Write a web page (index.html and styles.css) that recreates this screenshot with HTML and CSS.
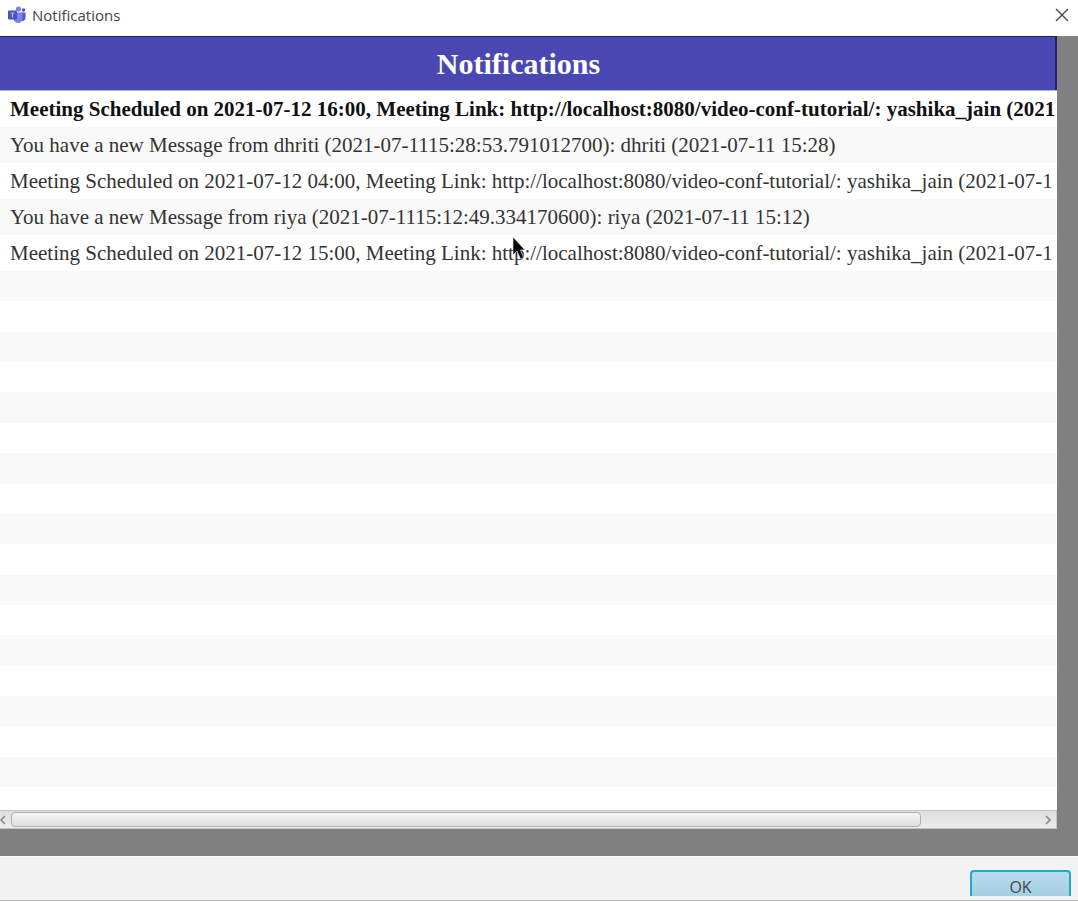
FILE: index.html
```html
<!DOCTYPE html>
<html lang="en">
<head>
<meta charset="utf-8">
<title>Notifications</title>
<link rel="stylesheet" href="styles.css">
</head>
<body>
<div class="dialog">
  <header class="titlebar">
    <svg class="app-icon" viewBox="0 0 18 18" aria-hidden="true">
      <circle cx="15.500" cy="4" r="1.700" fill="#4b53bc"/>
      <circle cx="10.500" cy="3" r="2.600" fill="#7b83eb"/>
      <path d="M12.500 6.500H17.500V11.500C17.500 14 16 15.300 13.500 15.300Z" fill="#5059c9"/>
      <path d="M5 6.500H14.500V12C14.500 15 12.500 17 10 17S5.500 15 5 12Z" fill="#7b83eb"/>
      <rect x="0" y="4.500" width="9" height="9" rx="1" fill="#4b53bc"/>
      <path d="M2.500 7H6.500M4.500 7V11.500" stroke="#b9bdf5" stroke-width="1.200" fill="none"/>
    </svg>
    <h1 class="window-title">Notifications</h1>
    <button class="close" type="button" aria-label="Close">
      <svg class="close-icon" viewBox="0 0 14 14" aria-hidden="true"><path d="M1 1L13 13M13 1L1 13" fill="none" stroke="#444" stroke-width="1.300"/></svg>
    </button>
  </header>
  <main class="stage">
    <section class="panel">
      <h2 class="banner">Notifications</h2>
      <ul class="list">
        <li class="row unread">Meeting Scheduled on 2021-07-12 16:00, Meeting Link: http://localhost:8080/video-conf-tutorial/: yashika_jain (2021</li>
        <li class="row">You have a new Message from dhriti (2021-07-1115:28:53.791012700): dhriti (2021-07-11 15:28)</li>
        <li class="row">Meeting Scheduled on 2021-07-12 04:00, Meeting Link: http://localhost:8080/video-conf-tutorial/: yashika_jain (2021-07-1</li>
        <li class="row">You have a new Message from riya (2021-07-1115:12:49.334170600): riya (2021-07-11 15:12)</li>
        <li class="row">Meeting Scheduled on 2021-07-12 15:00, Meeting Link: http://localhost:8080/video-conf-tutorial/: yashika_jain (2021-07-1</li>
        <li class="empty"></li><li class="empty"></li><li class="empty"></li>
        <li class="empty"></li><li class="empty"></li><li class="empty"></li>
        <li class="empty"></li><li class="empty"></li><li class="empty"></li>
        <li class="empty"></li><li class="empty"></li><li class="empty"></li>
        <li class="empty"></li><li class="empty"></li><li class="empty"></li>
        <li class="empty"></li><li class="empty"></li><li class="empty partial"></li>
      </ul>
      <div class="scrollbar">
        <button class="arrow" type="button" aria-label="Scroll left">
          <svg class="arrow-icon" viewBox="0 0 7 10" aria-hidden="true"><path d="M5 1L1 5L5 9" fill="none" stroke="#858585" stroke-width="1.500"/></svg>
        </button>
        <div class="track"><div class="thumb"></div></div>
        <button class="arrow" type="button" aria-label="Scroll right">
          <svg class="arrow-icon" viewBox="0 0 7 10" aria-hidden="true"><path d="M1 1L5 5L1 9" fill="none" stroke="#858585" stroke-width="1.500"/></svg>
        </button>
      </div>
    </section>
    <svg class="cursor" viewBox="0 0 16 26" aria-hidden="true"><path d="M1 1V19L5 15L8.500 23L11.500 21.500L8.500 14H13Z" fill="#080808" stroke="#eee" stroke-width="0.600"/></svg>
  </main>
  <footer class="actions">
    <button class="ok" type="button">OK</button>
  </footer>
</div>
</body>
</html>
```

FILE: styles.css
```css
* {
  box-sizing: border-box;
}

body {
  margin: 0;
  font-family: "Open Sans", "Noto Sans", sans-serif;
}

button {
  border: 0;
  padding: 0;
  background: none;
  font: inherit;
}

svg {
  display: block;
}

.dialog {
  display: flex;
  flex-direction: column;
  height: 100vh;
  background: #f2f2f2;
  border-bottom: 1px solid #b5b5b5;
}

.titlebar {
  display: flex;
  align-items: center;
  gap: 6px;
  padding: 0 9px 6px 8px;
  height: 36px;
  background: #fefefe;
}

.app-icon {
  width: 18px;
  height: 18px;
}

.window-title {
  flex: 1;
  margin: 0;
  font-size: 15px;
  font-weight: 400;
  line-height: 20px;
  color: #444;
}

.close-icon {
  width: 14px;
  height: 14px;
}

.stage {
  position: relative;
  flex: 1;
  min-height: 0;
  padding: 0 21px 27px 0;
  background: #808080;
}

.panel {
  display: flex;
  flex-direction: column;
  height: 100%;
  background: #fff;
}

.banner {
  margin: 0;
  padding-right: 20px;
  border-top: 1px solid #20206a;
  border-bottom: 1px solid #aeb0e8;
  background: #4a47b3;
  box-shadow: inset -2px 0 #20206a;
  color: #fff;
  font-family: "Liberation Serif", serif;
  font-size: 30px;
  line-height: 53px;
  text-align: center;
}

.list {
  display: flex;
  flex: 1;
  flex-direction: column;
  min-height: 0;
  margin: 0;
  padding: 0;
  overflow: hidden;
  list-style: none;
}

.row {
  flex: none;
  padding-left: 10px;
  font-family: "Liberation Serif", serif;
  font-size: 21px;
  line-height: 36px;
  color: #333;
  white-space: nowrap;
}

.unread {
  font-weight: 700;
  color: #111;
}

.empty {
  flex: 4;
}

.partial {
  flex: 3;
}

.list > :nth-child(even) {
  background: #f9f9f9;
}

.scrollbar {
  display: flex;
  align-items: center;
  height: 19px;
  border: 1px solid #c4c4c4;
  border-left: 0;
  background: linear-gradient(#dedede, #ebebeb);
}

.arrow {
  width: 11px;
}

.arrow-icon {
  width: 7px;
  height: 10px;
}

.track {
  flex: 1;
}

.thumb {
  width: 88%;
  height: 15px;
  border: 1px solid #b0b0b0;
  border-radius: 4px;
  background: linear-gradient(#f6f6f6, #dedede);
}

.cursor {
  position: absolute;
  left: 512px;
  top: 200px;
  width: 16px;
  height: 26px;
}

.actions {
  display: flex;
  justify-content: flex-end;
  height: 40px;
  margin-bottom: 4px;
  padding: 13px 7px 0 0;
  border-top: 1px solid #fafafa;
  overflow: hidden;
}

.ok {
  flex: none;
  width: 101px;
  height: 34px;
  border: 2px solid #22a9c9;
  border-radius: 4px;
  background: linear-gradient(#b8dcec, #9fcbe0);
  font-size: 16px;
  line-height: 30px;
  color: #444;
}
```
